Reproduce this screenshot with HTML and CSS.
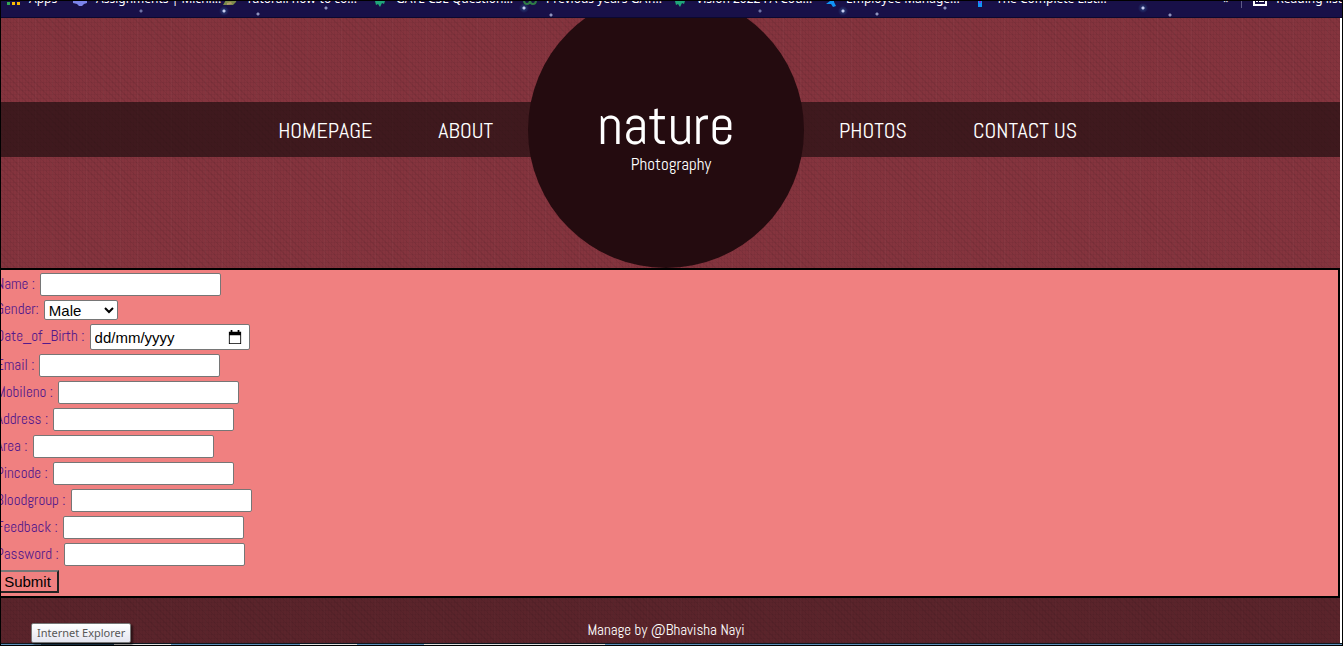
FILE: index.html
```html
<!DOCTYPE html>
<html lang="en">
<head>
<meta charset="utf-8">
<title>nature Photography</title>
<link rel="stylesheet" href="styles.css">
</head>
<body>
<div class="window">
  <div class="bookmarks">
    <a class="mark apps" href="#"><svg class="mark-icon" viewBox="0 0 16 16"><path fill="#34a853" d="M2 11h3v3H2z"/><path fill="#fbbc05" d="M7 11h3v3H7zM12 11h3v3h-3z"/></svg>Apps</a>
    <a class="mark" href="#"><svg class="mark-icon" viewBox="0 0 16 16"><path fill="#7b83eb" d="M1 8h14v4l-3 1-2 2H7l-2-2-4-1z"/></svg>Assignments | Michi...</a>
    <a class="mark" href="#"><svg class="mark-icon" viewBox="0 0 16 16"><path fill="#7c8b4a" d="M4 9l11-2-1 4-3 3H1z"/><path fill="#b39a6a" d="M5 12l4-1 1 2-5 1z"/></svg>Tutorail how-to co...</a>
    <a class="mark" href="#"><svg class="mark-icon" viewBox="0 0 16 16"><path fill="#1fa67a" d="M3 10l4-3 6 3-1 3-2-1-2 4-2-3-2 1z"/></svg>GATE CSE Question...</a>
    <a class="mark" href="#"><svg class="mark-icon" viewBox="0 0 16 16"><path fill="none" stroke="#2f7d46" stroke-width="2" d="M2 9q0 4 3 4t3-4q0 4 3 4t3-4"/></svg>Previous years GAT...</a>
    <a class="mark" href="#"><svg class="mark-icon" viewBox="0 0 16 16"><path fill="#1fa67a" d="M3 10l4-3 6 3-1 3-2-1-2 4-2-3-2 1z"/></svg>Vision 2022 FA Cou...</a>
    <a class="mark" href="#"><svg class="mark-icon" viewBox="0 0 16 16"><path fill="#1094f5" d="M4 13l8-6v4l2 4-3 1-2-3z"/></svg>Employee Manage...</a>
    <a class="mark" href="#"><svg class="mark-icon" viewBox="0 0 16 16"><path fill="#1094f5" d="M6 8h4v8H6z"/><path fill="#8a2be2" d="M7 8h2v4H7z"/></svg>The Complete List...</a>
    <a class="mark more" href="#">»</a>
    <a class="mark reading" href="#"><svg class="mark-icon" viewBox="0 0 16 16"><path fill="none" stroke="#fff" stroke-width="2" d="M2 3h12v11H2z"/><path fill="#fff" d="M4 7h2v2H4zM7 7h5v2H7zM4 10h2v1H4zM7 10h5v1H7z"/></svg>Reading list</a>
  </div>
  <div class="page">
    <header class="header">
      <nav class="nav">
        <div class="links left"><a href="#">HOMEPAGE</a><a href="#">ABOUT</a></div>
        <div class="links right"><a href="#">PHOTOS</a><a href="#">CONTACT US</a></div>
      </nav>
      <div class="brand">
        <h1 class="brand-name">nature</h1>
        <p class="brand-sub">Photography</p>
      </div>
    </header>
    <main class="panel">
      <form class="form">
        <div class="row"><label for="name">Name :</label><input id="name" type="text"></div>
        <div class="row"><label for="gender">Gender:</label><select id="gender"><option>Male</option><option>Female</option></select></div>
        <div class="row"><label for="dob">Date_of_Birth :</label><span class="date"><input id="dob" type="text" placeholder="dd/mm/yyyy"><button type="button" class="pick" aria-label="Open calendar"><svg viewBox="0 0 16 16"><path fill="#000" fill-rule="evenodd" d="M3 0h2v2h6V0h2v2h2v14H1V2h2zM2 6v9h12V6z"/></svg></button></span></div>
        <div class="row"><label for="email">Email :</label><input id="email" type="text"></div>
        <div class="row"><label for="mobile">Mobileno :</label><input id="mobile" type="text"></div>
        <div class="row"><label for="address">Address :</label><input id="address" type="text"></div>
        <div class="row"><label for="area">Area :</label><input id="area" type="text"></div>
        <div class="row"><label for="pincode">Pincode :</label><input id="pincode" type="text"></div>
        <div class="row"><label for="blood">Bloodgroup :</label><input id="blood" type="text"></div>
        <div class="row"><label for="feedback">Feedback :</label><input id="feedback" type="text"></div>
        <div class="row"><label for="password">Password :</label><input id="password" type="password"></div>
        <button class="submit" type="submit">Submit</button>
      </form>
    </main>
    <footer class="footer">Manage by @Bhavisha Nayi</footer>
  </div>
  <div class="taskbar"></div>
  <div class="tip" role="tooltip">Internet Explorer</div>
</div>
</body>
</html>
```
FILE: styles.css
```css
* { box-sizing: border-box; }

body {
  margin: 0;
  background: #000;
  font-family: Abel, "Liberation Sans Narrow", "Arial Narrow", "Liberation Sans", sans-serif;
}

.window {
  position: relative;
  display: flex;
  flex-direction: column;
  min-height: 100vh;
  padding: 1px;
}

.bookmarks {
  display: flex;
  height: 17px;
  overflow: hidden;
  border-bottom: 1px solid #0b0830;
  background-color: #181048;
  background-image:
    radial-gradient(circle at 223px 10px, #c5cdf0 0, #c5cdf0 1px, #25306a 2px, transparent 5px),
    radial-gradient(circle at 523px 7px, #c5cdf0 0, #c5cdf0 1px, #25306a 2px, transparent 5px),
    radial-gradient(circle at 325px 7px, #8f93bd 0, #8f93bd 1px, transparent 2px),
    radial-gradient(circle at 257px 13px, #8f93bd 0, #8f93bd 1px, transparent 2px),
    radial-gradient(circle at 550px 14px, #8f93bd 0, #8f93bd 1px, transparent 2px),
    radial-gradient(circle at 140px 10px, #6f73a5 0, #6f73a5 1px, transparent 2px);
  background-size: 619px 17px;
}

.mark {
  display: flex;
  flex: 0 0 150px;
  gap: 8px;
  align-items: center;
  height: 18px;
  margin-top: -11px;
  color: #fff;
  font: 12px/18px "Noto Sans", "Open Sans", sans-serif;
  text-decoration: none;
  white-space: nowrap;
}

.mark-icon { width: 16px; height: 16px; flex: none; }
.apps { flex-basis: 71px; padding-left: 4px; }
.more { flex: 1; justify-content: flex-end; padding-right: 12px; }
.reading { flex-basis: 96px; padding-left: 10px; border-left: 1px solid #5f5b88; }

.page {
  display: flex;
  flex: 1;
  flex-direction: column;
  border-right: 2px solid #fff;
  background-color: #85343e;
  background-image:
    repeating-linear-gradient(90deg, rgba(0, 0, 0, .04) 0 1px, transparent 1px 3px),
    repeating-linear-gradient(0deg, rgba(0, 0, 0, .04) 0 1px, transparent 1px 4px),
    repeating-linear-gradient(90deg, rgba(255, 255, 255, .02) 0 1px, transparent 1px 17px),
    repeating-linear-gradient(45deg, rgba(0, 0, 0, .05) 0 1px, transparent 1px 5px);
}

.header {
  display: grid;
  grid-template-columns: minmax(0, 1fr);
  align-items: start;
  overflow: hidden;
}

.nav, .brand { grid-area: 1 / 1; }

.nav {
  display: grid;
  grid-template-columns: 1fr 1fr;
  gap: 346px;
  margin-top: 84px;
  padding-right: 9px;
  background: rgba(28, 12, 14, .66);
}

.links { display: flex; gap: 66px; }
.left { justify-content: flex-end; }

.links a {
  padding-top: 2px;
  color: #fff;
  font-size: 22px;
  line-height: 53px;
  text-decoration: none;
}

.brand {
  justify-self: center;
  width: 276px;
  height: 276px;
  margin: -26px 9px 0 0;
  padding-top: 104px;
  border-radius: 50%;
  background: #240b0f;
  color: #fff;
  text-align: center;
}

.brand-name { margin: 0; font-size: 56px; font-weight: 400; line-height: 58px; }
.brand-sub { margin: 0; padding-left: 10px; font-size: 17px; line-height: 20px; }

.panel {
  overflow: hidden;
  border: solid #000;
  border-width: 2px 2px 2px 0;
  background: #f08080;
}

.form {
  display: flex;
  flex-direction: column;
  gap: 4px;
  margin-left: -5px;
  padding: 3px 0;
}

.row {
  display: flex;
  gap: 5px;
  align-items: center;
  color: #551a8b;
  font-size: 15px;
}

.row label { line-height: 18px; padding-bottom: 2px; }

.form input {
  width: 181px;
  height: 23px;
  padding: 1px 4px;
  border: 1px solid #767676;
  border-radius: 2px;
  background: #fff;
  color: #000;
  font: 15px "Liberation Sans", Arial, sans-serif;
}

.form select {
  width: 74px;
  height: 20px;
  padding: 0;
  border: 1px solid #767676;
  border-radius: 2px;
  background: #fff;
  color: #000;
  font: 15px "Liberation Sans", Arial, sans-serif;
}

.date { display: flex; align-items: center; }
.form .date input { width: 160px; height: 26px; }
.date input::placeholder { color: #000; }

.pick {
  width: 14px;
  height: 16px;
  margin-left: -22px;
  padding: 0;
  border: 0;
  background: none;
}

.pick svg { display: block; width: 14px; height: 16px; }

.submit {
  align-self: flex-start;
  width: 63px;
  height: 23px;
  padding: 0;
  border: 2px solid;
  border-color: #767676 #222 #222 #767676;
  background: transparent;
  color: #000;
  font: 15px "Liberation Sans", Arial, sans-serif;
}

.footer {
  flex: 1;
  padding: 22px 9px 3px 0;
  background: rgba(28, 12, 14, .4);
  color: #fff;
  font-size: 15px;
  line-height: 20px;
  text-align: center;
}

.taskbar {
  height: 2px;
  border-top: 1px solid #101820;
  background: linear-gradient(90deg, #5f8fb8 0 40px, #234a66 40px 113px, #ddd 113px 170px, #5f8fb8 170px 299px, #ddd 299px 356px, #5f8fb8 356px 423px, #ddd 423px 604px, #5f8fb8 604px) padding-box;
}

.tip {
  position: absolute;
  bottom: 3px;
  left: 31px;
  padding: 0 5px;
  border: 1px solid #767676;
  border-radius: 2px;
  background: linear-gradient(#fff, #e4e5f0);
  box-shadow: 2px 2px 2px rgba(0, 0, 0, .5);
  color: #575757;
  font: 11px/18px "Noto Sans", "Open Sans", sans-serif;
}
```
